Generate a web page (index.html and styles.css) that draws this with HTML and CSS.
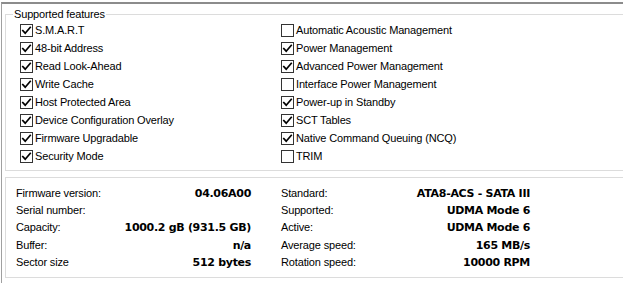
FILE: index.html
```html
<!DOCTYPE html>
<html>
<head>
<meta charset="utf-8">
<link rel="stylesheet" href="styles.css">
</head>
<body>
<div class="frame">
  <fieldset class="features">
    <legend class="legend">Supported features</legend>
    <div class="feature-grid">
      <div class="feat"><svg class="cb" viewBox="0 0 13 13"><rect x="0.5" y="0.5" width="12" height="12" class="box"/><polyline points="2.8,6.6 5.2,9.2 10.2,3.4" class="tick"/></svg><span>S.M.A.R.T</span></div>
      <div class="feat"><svg class="cb" viewBox="0 0 13 13"><rect x="0.5" y="0.5" width="12" height="12" class="box"/></svg><span>Automatic Acoustic Management</span></div>
      <div class="feat"><svg class="cb" viewBox="0 0 13 13"><rect x="0.5" y="0.5" width="12" height="12" class="box"/><polyline points="2.8,6.6 5.2,9.2 10.2,3.4" class="tick"/></svg><span>48-bit Address</span></div>
      <div class="feat"><svg class="cb" viewBox="0 0 13 13"><rect x="0.5" y="0.5" width="12" height="12" class="box"/><polyline points="2.8,6.6 5.2,9.2 10.2,3.4" class="tick"/></svg><span>Power Management</span></div>
      <div class="feat"><svg class="cb" viewBox="0 0 13 13"><rect x="0.5" y="0.5" width="12" height="12" class="box"/><polyline points="2.8,6.6 5.2,9.2 10.2,3.4" class="tick"/></svg><span>Read Look-Ahead</span></div>
      <div class="feat"><svg class="cb" viewBox="0 0 13 13"><rect x="0.5" y="0.5" width="12" height="12" class="box"/><polyline points="2.8,6.6 5.2,9.2 10.2,3.4" class="tick"/></svg><span>Advanced Power Management</span></div>
      <div class="feat"><svg class="cb" viewBox="0 0 13 13"><rect x="0.5" y="0.5" width="12" height="12" class="box"/><polyline points="2.8,6.6 5.2,9.2 10.2,3.4" class="tick"/></svg><span>Write Cache</span></div>
      <div class="feat"><svg class="cb" viewBox="0 0 13 13"><rect x="0.5" y="0.5" width="12" height="12" class="box"/></svg><span>Interface Power Management</span></div>
      <div class="feat"><svg class="cb" viewBox="0 0 13 13"><rect x="0.5" y="0.5" width="12" height="12" class="box"/><polyline points="2.8,6.6 5.2,9.2 10.2,3.4" class="tick"/></svg><span>Host Protected Area</span></div>
      <div class="feat"><svg class="cb" viewBox="0 0 13 13"><rect x="0.5" y="0.5" width="12" height="12" class="box"/><polyline points="2.8,6.6 5.2,9.2 10.2,3.4" class="tick"/></svg><span>Power-up in Standby</span></div>
      <div class="feat"><svg class="cb" viewBox="0 0 13 13"><rect x="0.5" y="0.5" width="12" height="12" class="box"/><polyline points="2.8,6.6 5.2,9.2 10.2,3.4" class="tick"/></svg><span>Device Configuration Overlay</span></div>
      <div class="feat"><svg class="cb" viewBox="0 0 13 13"><rect x="0.5" y="0.5" width="12" height="12" class="box"/><polyline points="2.8,6.6 5.2,9.2 10.2,3.4" class="tick"/></svg><span>SCT Tables</span></div>
      <div class="feat"><svg class="cb" viewBox="0 0 13 13"><rect x="0.5" y="0.5" width="12" height="12" class="box"/><polyline points="2.8,6.6 5.2,9.2 10.2,3.4" class="tick"/></svg><span>Firmware Upgradable</span></div>
      <div class="feat"><svg class="cb" viewBox="0 0 13 13"><rect x="0.5" y="0.5" width="12" height="12" class="box"/><polyline points="2.8,6.6 5.2,9.2 10.2,3.4" class="tick"/></svg><span>Native Command Queuing (NCQ)</span></div>
      <div class="feat"><svg class="cb" viewBox="0 0 13 13"><rect x="0.5" y="0.5" width="12" height="12" class="box"/><polyline points="2.8,6.6 5.2,9.2 10.2,3.4" class="tick"/></svg><span>Security Mode</span></div>
      <div class="feat"><svg class="cb" viewBox="0 0 13 13"><rect x="0.5" y="0.5" width="12" height="12" class="box"/></svg><span>TRIM</span></div>
    </div>
  </fieldset>
  <div class="info">
    <div class="info-grid">
      <div class="pair"><span>Firmware version:</span><b>04.06A00</b></div>
      <div class="pair"><span>Standard:</span><b>ATA8-ACS - SATA III</b></div>
      <div class="pair"><span>Serial number:</span><b></b></div>
      <div class="pair"><span>Supported:</span><b>UDMA Mode 6</b></div>
      <div class="pair"><span>Capacity:</span><b>1000.2 gB (931.5 GB)</b></div>
      <div class="pair"><span>Active:</span><b>UDMA Mode 6</b></div>
      <div class="pair"><span>Buffer:</span><b>n/a</b></div>
      <div class="pair"><span>Average speed:</span><b>165 MB/s</b></div>
      <div class="pair"><span>Sector size</span><b>512 bytes</b></div>
      <div class="pair"><span>Rotation speed:</span><b>10000 RPM</b></div>
    </div>
  </div>
</div>
</body>
</html>
```
FILE: styles.css
```css
html, body {
  margin: 0;
  padding: 0;
  background: #ffffff;
  overflow: hidden;
}
body {
  font-family: "Liberation Sans", Arial, sans-serif;
  font-size: 11px;
  letter-spacing: -0.15px;
  color: #000;
  width: 623px;
  height: 285px;
}
.frame {
  margin: 2px 0 0 1px;
  border-top: 2px solid #8c8c8c;
  border-left: 1px solid #a0a0a0;
  height: 281px;
  width: 622px;
  padding: 4px 0 0 3px;
  box-sizing: border-box;
  overflow: hidden;
}
.features {
  margin: 0;
  padding: 0 0 4px 14px;
  border: 1px solid #dcdcdc;
  border-right: none;
  min-width: 0;
}
.legend {
  margin-left: -7px;
  padding: 0 1px;
  line-height: 13px;
}
.feature-grid {
  display: grid;
  grid-template-columns: 261px auto;
  grid-auto-rows: 18.1px;
}
.feat {
  display: flex;
  align-items: center;
  gap: 2px;
  line-height: 13px;
  white-space: nowrap;
}
.cb {
  width: 13px;
  height: 13px;
  flex: none;
}
.box {
  fill: #fff;
  stroke: #333;
  stroke-width: 1;
}
.tick {
  fill: none;
  stroke: #000;
  stroke-width: 1.7;
  stroke-linecap: square;
  stroke-linejoin: miter;
}
.info {
  margin-top: 6px;
  border: 1px solid #dcdcdc;
  border-right: none;
  padding: 7px 0 6px 10px;
}
.info-grid {
  display: grid;
  grid-template-columns: 235px 249px;
  column-gap: 30px;
  grid-auto-rows: 17.25px;
}
.pair {
  display: flex;
  justify-content: space-between;
  align-items: center;
  white-space: nowrap;
  line-height: 13px;
}
.pair b {
  font-family: "DejaVu Sans", "Liberation Sans", sans-serif;
  font-weight: bold;
  font-size: 11px;
  letter-spacing: -0.3px;
}
```
